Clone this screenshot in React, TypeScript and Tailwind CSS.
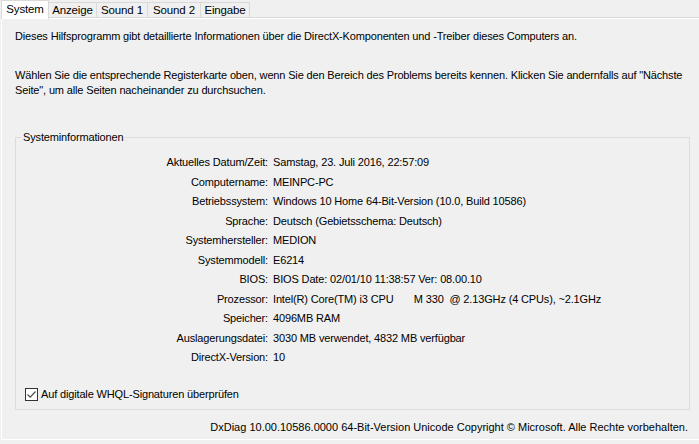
import React from "react";

const tabs = ["System", "Anzeige", "Sound 1", "Sound 2", "Eingabe"];
const tabWidths = ["w-[48px]", "w-[48px]", "w-[51px]", "w-[53px]", "w-[49px]"];

const rows: [string, string][] = [
  ["Aktuelles Datum/Zeit:", "Samstag, 23. Juli 2016, 22:57:09"],
  ["Computername:", "MEINPC-PC"],
  ["Betriebssystem:", "Windows 10 Home 64-Bit-Version (10.0, Build 10586)"],
  ["Sprache:", "Deutsch (Gebietsschema: Deutsch)"],
  ["Systemhersteller:", "MEDION"],
  ["Systemmodell:", "E6214"],
  ["BIOS:", "BIOS Date: 02/01/10 11:38:57 Ver: 08.00.10"],
  ["Prozessor:", "Intel(R) Core(TM) i3 CPU       M 330  @ 2.13GHz (4 CPUs), ~2.1GHz"],
  ["Speicher:", "4096MB RAM"],
  ["Auslagerungsdatei:", "3030 MB verwendet, 4832 MB verfügbar"],
  ["DirectX-Version:", "10"],
];

const App = () => {
  return (
    <div
      className="w-[699px] h-[444px] overflow-hidden bg-[#f0f0f0] text-[11px] tracking-[-0.15px] text-black"
      style={{ fontFamily: '"Liberation Sans", Arial, sans-serif' }}
    >
      {/* Tabs */}
      <div className="flex items-end h-[17px] pl-[1px] relative z-10 text-[11.5px]">
        {tabs.map((t, i) =>
          i === 0 ? (
            <div
              key={t}
              className={`${tabWidths[i]} h-[19px] -mb-[2px] bg-white border border-b-0 border-[#d9d9d9] flex items-start justify-center pt-[1px] leading-[14px]`}
            >
              {t}
            </div>
          ) : (
            <div
              key={t}
              className={`${tabWidths[i]} h-[15px] bg-[#f0f0f0] border border-l-0 border-b-0 border-[#d9d9d9] flex items-center justify-center leading-[14px]`}
            >
              {t}
            </div>
          )
        )}
      </div>

      {/* Tab page */}
      <div className="ml-[1px] w-[698px] h-[423px] border-t border-[#d9d9d9]">
        <div className="h-full border-t border-l border-b border-white pl-[13px] pr-[8px]">
          <p className="pt-[10px] leading-[15px] whitespace-nowrap">
            Dieses Hilfsprogramm gibt detaillierte Informationen über die DirectX-Komponenten und -Treiber dieses Computers an.
          </p>
          <p className="mt-[24px] leading-[15px] whitespace-nowrap">
            Wählen Sie die entsprechende Registerkarte oben, wenn Sie den Bereich des Problems bereits kennen. Klicken Sie andernfalls auf "Nächste
            <br />
            Seite", um alle Seiten nacheinander zu durchsuchen.
          </p>

          <fieldset className="mt-[32px] w-[675px] h-[280px] border border-[#dcdcdc] px-[5px] pb-[9px]">
            <legend className="px-[2px] leading-[15px]">Systeminformationen</legend>
            <div className="mt-[8px] grid grid-cols-[247px_1fr] gap-x-[5px]">
              {rows.map(([k, v]) => (
                <React.Fragment key={k}>
                  <div className="text-right leading-[19.5px]">{k}</div>
                  <div className="leading-[19.5px] whitespace-pre">{v}</div>
                </React.Fragment>
              ))}
            </div>
            <div className="mt-[19px] ml-[4px] flex items-center gap-[3px] leading-[15px]">
              <div className="w-[13px] h-[13px] border border-[#333333] bg-white flex items-center justify-center">
                <svg width="11" height="11" viewBox="0 0 11 11">
                  <path d="M1.5 5.5 L4.2 8.2 L9.5 2.5" fill="none" stroke="#4a4a4a" strokeWidth="1.2" />
                </svg>
              </div>
              <span>Auf digitale WHQL-Signaturen überprüfen</span>
            </div>
          </fieldset>

          <div className="mt-[10px] text-right pr-[3px] leading-[15px] tracking-normal">
            DxDiag 10.00.10586.0000 64-Bit-Version Unicode Copyright © Microsoft. Alle Rechte vorbehalten.
          </div>
        </div>
      </div>
    </div>
  );
};

export default App;
